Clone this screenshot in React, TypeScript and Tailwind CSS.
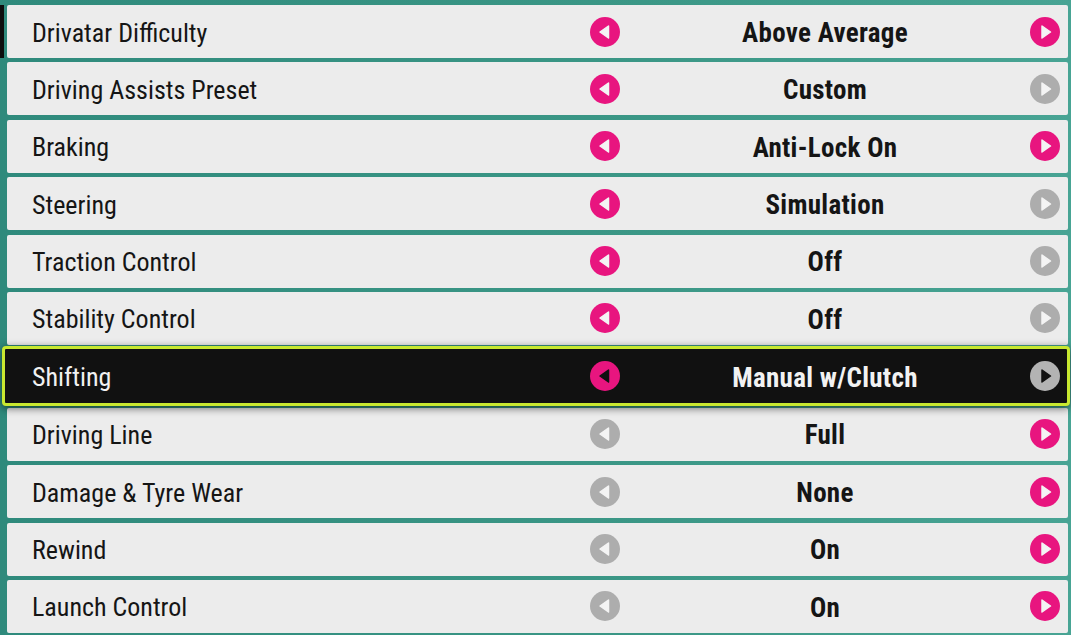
import React from 'react';

type Row = { label: string; value: string; left: boolean; right: boolean };

const rows: Row[] = [
  { label: 'Drivatar Difficulty', value: 'Above Average', left: true, right: true },
  { label: 'Driving Assists Preset', value: 'Custom', left: true, right: false },
  { label: 'Braking', value: 'Anti-Lock On', left: true, right: true },
  { label: 'Steering', value: 'Simulation', left: true, right: false },
  { label: 'Traction Control', value: 'Off', left: true, right: false },
  { label: 'Stability Control', value: 'Off', left: true, right: false },
  { label: 'Shifting', value: 'Manual w/Clutch', left: true, right: false },
  { label: 'Driving Line', value: 'Full', left: false, right: true },
  { label: 'Damage & Tyre Wear', value: 'None', left: false, right: true },
  { label: 'Rewind', value: 'On', left: false, right: true },
  { label: 'Launch Control', value: 'On', left: false, right: true },
];

const SELECTED = 6;

function Arrow({ dir, active, dark }: { dir: 'left' | 'right'; active: boolean; dark: boolean }) {
  const fill = active ? '#e8157f' : dark ? '#b3b3b3' : '#adadad';
  const tri = dark ? '#111111' : '#f4f4f4';
  const d = dir === 'left' ? 'M18.5 9 L10 15 L18.5 21 Z' : 'M12 9 L20.5 15 L12 21 Z';
  return (
    <svg width="30" height="30" viewBox="0 0 30 30" className="shrink-0">
      <circle cx="15" cy="15" r="15" fill={fill} />
      <path d={d} fill={tri} stroke={tri} strokeWidth="1.5" strokeLinejoin="round" />
    </svg>
  );
}

const font = { fontFamily: 'Roboto, "Liberation Sans", sans-serif' };

function SettingRow({ row, selected }: { row: Row; selected: boolean }) {
  const content = (
    <>
      <div className="flex-1 pt-[3px] text-[26px] font-normal [font-stretch:75%]" style={font}>
        {row.label}
      </div>
      <div className="flex w-[470px] items-center">
        <Arrow dir="left" active={row.left} dark={selected} />
        <div className="flex-1 pt-[3px] text-center text-[27px] font-bold tracking-[0.3px] [font-stretch:75%]" style={font}>
          {row.value}
        </div>
        <Arrow dir="right" active={row.right} dark={selected} />
      </div>
    </>
  );

  if (selected) {
    return (
      <div className="relative z-10 -my-[3px] ml-[-5px] mr-[-2px] flex h-[60px] items-center rounded-[4px] border-[3px] border-[#c8e830] bg-[#111111] pl-[27px] pr-[7px] text-[#f2f2f2] shadow-[0_2px_8px_rgba(0,0,0,0.6)]">
        {content}
      </div>
    );
  }

  return (
    <div className="flex h-[53px] items-center rounded-[2px] bg-[#ececec] pl-[25px] pr-[8px] text-[#151515]">
      {content}
    </div>
  );
}

export default function App() {
  return (
    <div className="h-[635px] w-[1071px] overflow-hidden bg-[linear-gradient(90deg,#2f8a7c_0%,#3b9786_60%,#48a494_100%)]">
      <div className="relative flex flex-col gap-[4.4px] pl-[7px] pr-[3px] pt-[5px]">
        <div className="absolute left-0 top-[5px] h-[53px] w-[4px] bg-[#0d0d0d]" />
        {rows.map((r, i) => (
          <SettingRow key={r.label} row={r} selected={i === SELECTED} />
        ))}
      </div>
    </div>
  );
}
